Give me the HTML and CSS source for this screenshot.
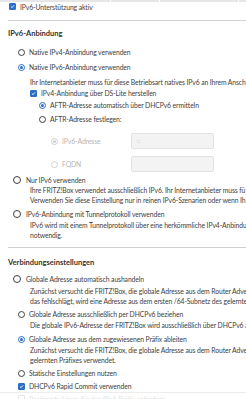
FILE: index.html
```html
<!DOCTYPE html>
<html lang="de">
<head>
    <meta charset="UTF-8">
    <meta name="viewport" content="width=device-width, initial-scale=1.0">
    <title>IPv6</title>
    <link rel="stylesheet" href="styles.css">
</head>
<body>

    <div class="topbar"><span class="seg s1"></span><span class="seg s2"></span><span class="seg s3"></span></div>

    <div class="row top"><span class="box on"><svg viewBox="0 0 8 8"><path d="M1.6 4.2 L3.3 5.8 L6.4 2.2" /></svg></span>IPv6-Unterstützung aktiv</div>

    <hr class="sep first">

    <h2 class="head h-a">IPv6-Anbindung</h2>

    <div class="row ind1 r-ipv4"><span class="radio"></span>Native IPv4-Anbindung verwenden</div>
    <div class="row ind1 r-ipv6"><span class="radio on"></span>Native IPv6-Anbindung verwenden</div>
    <p class="desc d-ipv6">Ihr Internetanbieter muss für diese Betriebsart natives IPv6 an Ihrem Ansch</p>
    <div class="row ind2 r-ds"><span class="box on"><svg viewBox="0 0 8 8"><path d="M1.6 4.2 L3.3 5.8 L6.4 2.2" /></svg></span>IPv4-Anbindung über DS-Lite herstellen</div>
    <div class="row ind3 r-aftr1"><span class="radio on"></span>AFTR-Adresse automatisch über DHCPv6 ermitteln</div>
    <div class="row ind3 r-aftr2"><span class="radio"></span>AFTR-Adresse festlegen:</div>

    <div class="field f-addr">
        <div class="row ind4 dis"><span class="radio on dis"></span>IPv6-Adresse</div>
        <div class="input">::</div>
    </div>
    <div class="field f-fqdn">
        <div class="row ind4 dis"><span class="radio dis"></span>FQDN</div>
        <div class="input"></div>
    </div>

    <div class="row ind0 r-nur"><span class="radio big"></span>Nur IPv6 verwenden</div>
    <p class="desc d-nur">Ihre FRITZ!Box verwendet ausschließlich IPv6. Ihr Internetanbieter muss fü<br>Verwenden Sie diese Einstellung nur in reinen IPv6-Szenarien oder wenn Ih</p>
    <div class="row ind0 r-tun"><span class="radio big"></span>IPv6-Anbindung mit Tunnelprotokoll verwenden</div>
    <p class="desc d-tun">IPv6 wird mit einem Tunnelprotokoll über eine herkömmliche IPv4-Anbindu<br>notwendig.</p>

    <hr class="sep second">

    <h2 class="head h-b">Verbindungseinstellungen</h2>

    <div class="row ind0 r-g1"><span class="radio big"></span>Globale Adresse automatisch aushandeln</div>
    <p class="desc d-g1">Zunächst versucht die FRITZ!Box, die globale Adresse aus dem Router Adve<br>das fehlschlägt, wird eine Adresse aus dem ersten /64-Subnetz des gelernte</p>
    <div class="row ind1 r-g2"><span class="radio"></span>Globale Adresse ausschließlich per DHCPv6 beziehen</div>
    <p class="desc d-g2">Die globale IPv6-Adresse der FRITZ!Box wird ausschließlich über DHCPv6 an</p>
    <div class="row ind1 r-g3"><span class="radio on"></span>Globale Adresse aus dem zugewiesenen Präfix ableiten</div>
    <p class="desc d-g3">Zunächst versucht die FRITZ!Box, die globale Adresse aus dem Router Adve<br>gelernten Präfixes verwendet.</p>
    <div class="row ind1 r-stat"><span class="radio"></span>Statische Einstellungen nutzen</div>
    <div class="row ind1 r-rapid"><span class="box on"><svg viewBox="0 0 8 8"><path d="M1.6 4.2 L3.3 5.8 L6.4 2.2" /></svg></span>DHCPv6 Rapid Commit verwenden</div>

    <div class="row ind1 r-next faded"><span class="box"></span>Bestimmte Länge für den IPv6-Präfix anfordern</div>

</body>
</html>
```

FILE: styles.css
```css
body { margin: 0; font-family: "Lato", "Liberation Sans", sans-serif; font-size: 6.8px; letter-spacing: -0.1px; color: #414141; width: 246px; overflow: hidden; }

/* leiste oben (rest der tabelle) */
.topbar { display: flex; height: 2px; background: #e6e6e6; }
.seg { display: block; width: 1px; height: 2px; background: #fff; }
.s1 { margin-left: 110px; }
.s2 { margin-left: 48px; }
.s3 { margin-left: 78px; }

.row { display: flex; align-items: center; height: 12px; white-space: nowrap; }
.top { height: 9px; padding-left: 9px; }
.ind0 { padding-left: 13px; }
.ind1 { padding-left: 18px; }
.ind2 { padding-left: 30px; }
.ind3 { padding-left: 39px; }
.ind4 { padding-left: 51px; }

.radio { flex: none; box-sizing: border-box; width: 7px; height: 7px; border: 1px solid #404040; border-radius: 50%; margin-right: 4px; position: relative; }
.radio.big { width: 8px; height: 8px; margin-right: 5px; }
.radio.on { border-color: #2d6ec9; }
.radio.on::after { content: ""; position: absolute; left: 1px; top: 1px; width: 3px; height: 3px; border-radius: 50%; background: #2d6ec9; }
.radio.dis { border-color: #cfcfcf; }
.radio.on.dis::after { background: #cfcfcf; }

.box { flex: none; box-sizing: border-box; width: 7px; height: 7px; border: 1px solid #555; border-radius: 1px; margin-right: 4px; }
.box.on { background: #2d6ec9; border-color: #2d6ec9; }
.box svg { display: block; width: 5px; height: 5px; fill: none; stroke: #fff; stroke-width: 1.4; }

.sep { border: 0; border-top: 1px solid #cfcfcf; margin: 0 0 0 8px; height: 0; }
.sep.first { margin-top: 9px; }
.sep.second { margin-top: 7px; }

.head { margin: 0; padding-left: 8px; height: 10px; line-height: 10px; font-size: 7.5px; font-weight: 700; letter-spacing: 0; color: #333; }
.h-a { margin-top: 8px; }
.h-b { margin-top: 10px; }

.desc { margin: 0; padding-left: 30px; line-height: 10px; white-space: nowrap; }
.dis { color: #b5b5b5; }

.field { display: flex; align-items: center; height: 16px; }
.field .row { width: 131px; box-sizing: border-box; }
.input { box-sizing: border-box; width: 83px; height: 16px; background: #f3f3f3; border: 1px solid #e2e2e2; border-radius: 2px; padding-left: 5px; line-height: 14px; color: #c8c8c8; font-size: 6px; }

.r-ipv4 { margin-top: 7px; }
.r-ipv6 { margin-top: 3px; }
.d-ipv6 { margin-top: 4px; }
.r-aftr2 { margin-top: 2px; }
.f-addr { margin-top: 8px; }
.f-fqdn { margin-top: 7px; }
.r-nur { margin-top: 2px; }
.d-nur { margin-top: -1px; }
.r-tun { margin-top: 3px; }
.r-g1 { margin-top: 5px; }
.d-g1 { margin-top: 1px; }
.r-g2 { margin-top: 2px; }
.r-g3 { margin-top: 3px; }
.r-stat { margin-top: 2px; }
.r-rapid { margin-top: 1px; }
.r-next { border-top: 1px solid #ededed; margin-top: 0; padding-top: 2px; align-items: flex-start; }
.faded { color: #e0e0e0; }
.faded .box { border-color: #e4e4e4; }
```
